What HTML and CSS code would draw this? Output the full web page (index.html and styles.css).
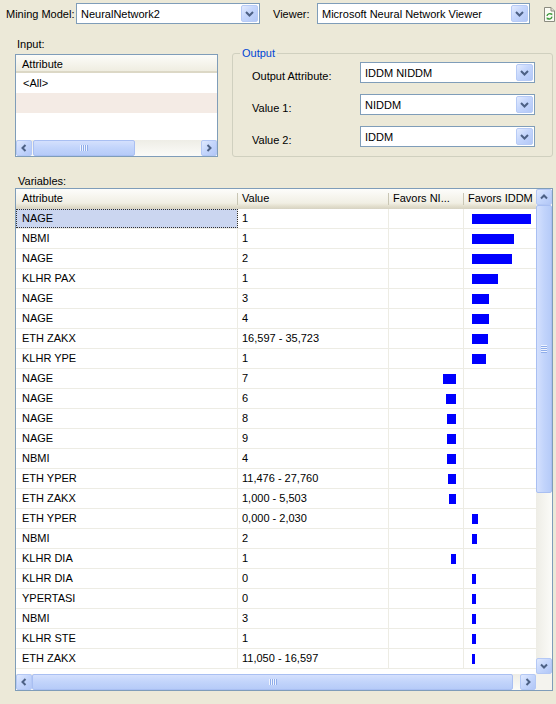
FILE: index.html
```html
<!DOCTYPE html>
<html>
<head>
<meta charset="utf-8">
<link rel="stylesheet" href="styles.css">
</head>
<body>
<div class="topbar">
  <span class="lbl lbl-model">Mining Model:</span>
  <div class="combo combo-model">
    <span class="combo-text">NeuralNetwork2</span>
    <span class="combo-btn"><svg width="9" height="6" viewBox="0 0 9 6"><polyline points="1,1 4.5,4.5 8,1" fill="none" stroke="#4d6185" stroke-width="2"/></svg></span>
  </div>
  <span class="lbl lbl-viewer">Viewer:</span>
  <div class="combo combo-viewer">
    <span class="combo-text">Microsoft Neural Network Viewer</span>
    <span class="combo-btn"><svg width="9" height="6" viewBox="0 0 9 6"><polyline points="1,1 4.5,4.5 8,1" fill="none" stroke="#4d6185" stroke-width="2"/></svg></span>
  </div>
  <span class="refresh">
    <svg width="11" height="15" viewBox="0 0 11 15">
      <path d="M0.5 0.5 H7 L10.5 4 V14.5 H0.5 Z" fill="#fbfbf4" stroke="#8b8b80"/>
      <path d="M7 0.5 V4 H10.5" fill="#e4e4d8" stroke="#8b8b80"/>
      <path d="M3 9 A2.6 2.6 0 0 1 7.6 7.6" fill="none" stroke="#3c9a3c" stroke-width="1.3"/>
      <path d="M8 9.6 A2.6 2.6 0 0 1 3.4 11" fill="none" stroke="#3c9a3c" stroke-width="1.3"/>
      <path d="M6.3 6.2 L8.4 6.4 L8.2 8.5 Z" fill="#3c9a3c"/>
      <path d="M4.7 12.4 L2.6 12.2 L2.8 10.1 Z" fill="#3c9a3c"/>
    </svg>
  </span>
</div>

<div class="mid">
  <div class="input-panel">
    <div class="section-label">Input:</div>
    <div class="listbox">
      <div class="lv-header"><div class="hcell hcell-full">Attribute</div></div>
      <div class="lv-body">
        <div class="lv-row">&lt;All&gt;</div>
        <div class="lv-row lv-row-alt"></div>
      </div>
      <div class="hscroll">
        <span class="sb-btn"><svg width="6" height="8" viewBox="0 0 6 8"><polyline points="4.5,1 1.5,4 4.5,7" fill="none" stroke="#4d6185" stroke-width="2"/></svg></span>
        <div class="sb-track-h">
          <div class="thumb-h thumb-in"><span class="grip-h"></span></div>
        </div>
        <span class="sb-btn"><svg width="6" height="8" viewBox="0 0 6 8"><polyline points="1.5,1 4.5,4 1.5,7" fill="none" stroke="#4d6185" stroke-width="2"/></svg></span>
      </div>
    </div>
  </div>

  <fieldset class="output">
    <legend>Output</legend>
    <div class="orow">
      <span class="olabel">Output Attribute:</span>
      <div class="combo combo-out">
        <span class="combo-text">IDDM NIDDM</span>
        <span class="combo-btn"><svg width="9" height="6" viewBox="0 0 9 6"><polyline points="1,1 4.5,4.5 8,1" fill="none" stroke="#4d6185" stroke-width="2"/></svg></span>
      </div>
    </div>
    <div class="orow">
      <span class="olabel">Value 1:</span>
      <div class="combo combo-out">
        <span class="combo-text">NIDDM</span>
        <span class="combo-btn"><svg width="9" height="6" viewBox="0 0 9 6"><polyline points="1,1 4.5,4.5 8,1" fill="none" stroke="#4d6185" stroke-width="2"/></svg></span>
      </div>
    </div>
    <div class="orow">
      <span class="olabel">Value 2:</span>
      <div class="combo combo-out">
        <span class="combo-text">IDDM</span>
        <span class="combo-btn"><svg width="9" height="6" viewBox="0 0 9 6"><polyline points="1,1 4.5,4.5 8,1" fill="none" stroke="#4d6185" stroke-width="2"/></svg></span>
      </div>
    </div>
  </fieldset>
</div>

<div class="section-label vars-label">Variables:</div>
<div class="gridbox">
  <div class="grid-main">
    <div class="grid-content">
      <div class="ghead">
        <div class="hcell c-attr">Attribute</div>
        <div class="hcell c-val">Value</div>
        <div class="hcell c-ni">Favors NI...</div>
        <div class="hcell c-iddm">Favors IDDM</div>
      </div>
      <div class="grow"><div class="cell c-attr sel">NAGE</div><div class="cell c-val">1</div><div class="cell c-ni"></div><div class="cell c-iddm"><span class="bar" style="width:59px"></span></div></div>
      <div class="grow"><div class="cell c-attr">NBMI</div><div class="cell c-val">1</div><div class="cell c-ni"></div><div class="cell c-iddm"><span class="bar" style="width:42px"></span></div></div>
      <div class="grow"><div class="cell c-attr">NAGE</div><div class="cell c-val">2</div><div class="cell c-ni"></div><div class="cell c-iddm"><span class="bar" style="width:40px"></span></div></div>
      <div class="grow"><div class="cell c-attr">KLHR PAX</div><div class="cell c-val">1</div><div class="cell c-ni"></div><div class="cell c-iddm"><span class="bar" style="width:26px"></span></div></div>
      <div class="grow"><div class="cell c-attr">NAGE</div><div class="cell c-val">3</div><div class="cell c-ni"></div><div class="cell c-iddm"><span class="bar" style="width:17px"></span></div></div>
      <div class="grow"><div class="cell c-attr">NAGE</div><div class="cell c-val">4</div><div class="cell c-ni"></div><div class="cell c-iddm"><span class="bar" style="width:17px"></span></div></div>
      <div class="grow"><div class="cell c-attr">ETH ZAKX</div><div class="cell c-val">16,597 - 35,723</div><div class="cell c-ni"></div><div class="cell c-iddm"><span class="bar" style="width:16px"></span></div></div>
      <div class="grow"><div class="cell c-attr">KLHR YPE</div><div class="cell c-val">1</div><div class="cell c-ni"></div><div class="cell c-iddm"><span class="bar" style="width:14px"></span></div></div>
      <div class="grow"><div class="cell c-attr">NAGE</div><div class="cell c-val">7</div><div class="cell c-ni"><span class="bar" style="width:13px"></span></div><div class="cell c-iddm"></div></div>
      <div class="grow"><div class="cell c-attr">NAGE</div><div class="cell c-val">6</div><div class="cell c-ni"><span class="bar" style="width:10px"></span></div><div class="cell c-iddm"></div></div>
      <div class="grow"><div class="cell c-attr">NAGE</div><div class="cell c-val">8</div><div class="cell c-ni"><span class="bar" style="width:9px"></span></div><div class="cell c-iddm"></div></div>
      <div class="grow"><div class="cell c-attr">NAGE</div><div class="cell c-val">9</div><div class="cell c-ni"><span class="bar" style="width:9px"></span></div><div class="cell c-iddm"></div></div>
      <div class="grow"><div class="cell c-attr">NBMI</div><div class="cell c-val">4</div><div class="cell c-ni"><span class="bar" style="width:9px"></span></div><div class="cell c-iddm"></div></div>
      <div class="grow"><div class="cell c-attr">ETH YPER</div><div class="cell c-val">11,476 - 27,760</div><div class="cell c-ni"><span class="bar" style="width:8px"></span></div><div class="cell c-iddm"></div></div>
      <div class="grow"><div class="cell c-attr">ETH ZAKX</div><div class="cell c-val">1,000 - 5,503</div><div class="cell c-ni"><span class="bar" style="width:7px"></span></div><div class="cell c-iddm"></div></div>
      <div class="grow"><div class="cell c-attr">ETH YPER</div><div class="cell c-val">0,000 - 2,030</div><div class="cell c-ni"></div><div class="cell c-iddm"><span class="bar" style="width:6px"></span></div></div>
      <div class="grow"><div class="cell c-attr">NBMI</div><div class="cell c-val">2</div><div class="cell c-ni"></div><div class="cell c-iddm"><span class="bar" style="width:5px"></span></div></div>
      <div class="grow"><div class="cell c-attr">KLHR DIA</div><div class="cell c-val">1</div><div class="cell c-ni"><span class="bar" style="width:5px"></span></div><div class="cell c-iddm"></div></div>
      <div class="grow"><div class="cell c-attr">KLHR DIA</div><div class="cell c-val">0</div><div class="cell c-ni"></div><div class="cell c-iddm"><span class="bar" style="width:4px"></span></div></div>
      <div class="grow"><div class="cell c-attr">YPERTASI</div><div class="cell c-val">0</div><div class="cell c-ni"></div><div class="cell c-iddm"><span class="bar" style="width:4px"></span></div></div>
      <div class="grow"><div class="cell c-attr">NBMI</div><div class="cell c-val">3</div><div class="cell c-ni"></div><div class="cell c-iddm"><span class="bar" style="width:4px"></span></div></div>
      <div class="grow"><div class="cell c-attr">KLHR STE</div><div class="cell c-val">1</div><div class="cell c-ni"></div><div class="cell c-iddm"><span class="bar" style="width:4px"></span></div></div>
      <div class="grow"><div class="cell c-attr">ETH ZAKX</div><div class="cell c-val">11,050 - 16,597</div><div class="cell c-ni"></div><div class="cell c-iddm"><span class="bar" style="width:3px"></span></div></div>
    </div>
    <div class="vscroll">
      <span class="sb-btn"><svg width="8" height="6" viewBox="0 0 8 6"><polyline points="1,4.5 4,1.5 7,4.5" fill="none" stroke="#4d6185" stroke-width="2"/></svg></span>
      <div class="thumb-v"><span class="grip-v"></span></div>
      <div class="sb-track-v"></div>
      <span class="sb-btn"><svg width="8" height="6" viewBox="0 0 8 6"><polyline points="1,1.5 4,4.5 7,1.5" fill="none" stroke="#4d6185" stroke-width="2"/></svg></span>
    </div>
  </div>
  <div class="hbar-row">
    <div class="hscroll hscroll-main">
      <span class="sb-btn"><svg width="6" height="8" viewBox="0 0 6 8"><polyline points="4.5,1 1.5,4 4.5,7" fill="none" stroke="#4d6185" stroke-width="2"/></svg></span>
      <div class="sb-track-h">
        <div class="thumb-h thumb-main"><span class="grip-h"></span></div>
      </div>
      <span class="sb-btn"><svg width="6" height="8" viewBox="0 0 6 8"><polyline points="1.5,1 4.5,4 1.5,7" fill="none" stroke="#4d6185" stroke-width="2"/></svg></span>
    </div>
    <div class="corner"></div>
  </div>
</div>
</body>
</html>
```
FILE: styles.css
```css
* { box-sizing: border-box; }
html, body { margin: 0; padding: 0; }
body {
  width: 556px;
  height: 704px;
  overflow: hidden;
  background: #ece9d8;
  font-family: "Liberation Sans", Arial, sans-serif;
  font-size: 11px;
  color: #000;
}

/* top bar */
.topbar {
  display: flex;
  align-items: center;
  height: 21px;
  margin-top: 3px;
  padding-left: 6px;
}
.lbl { white-space: nowrap; }
.lbl-model { width: 70px; }
.lbl-viewer { width: 44px; margin-left: 13px; }
.refresh { display: flex; margin-left: 14px; margin-top: 2px; }

.combo {
  height: 21px;
  border: 1px solid #7f9db9;
  background: #fff;
  display: flex;
  align-items: center;
  padding: 1px;
}
.combo-text {
  flex: 1;
  padding-left: 3px;
  white-space: nowrap;
  overflow: hidden;
}
.combo-btn {
  width: 17px;
  height: 17px;
  display: flex;
  align-items: center;
  justify-content: center;
  border: 1px solid #b7cbf6;
  border-radius: 2px;
  background: linear-gradient(135deg, #e3ebfe 0%, #c5d6fc 45%, #b3c8f7 100%);
}
.combo-model { width: 184px; }
.combo-viewer { width: 213px; }
.combo-out { width: 175px; }

/* middle */
.mid { display: flex; margin-top: 13px; }
.input-panel { margin-left: 15px; width: 203px; }
.section-label { line-height: 14px; padding-left: 2px; }
.listbox {
  margin-top: 3px;
  height: 103px;
  border: 1px solid #7f9db9;
  background: #fff;
  display: flex;
  flex-direction: column;
}
.lv-header {
  display: flex;
  height: 18px;
  background: linear-gradient(#fcfcf9, #efede1);
  border-bottom: 2px solid #dcd8c6;
}
.lv-body { flex: 1; }
.lv-row {
  height: 20px;
  line-height: 20px;
  padding-left: 7px;
}
.lv-row-alt { background: #f4ebe5; }

.output {
  margin: 10px 0 0 14px;
  width: 321px;
  border: 1px solid #d0d0bf;
  border-radius: 3px;
  padding: 2px 17px 8px 19px;
  min-width: 0;
}
.output legend {
  color: #0046d5;
  line-height: 13px;
  padding: 0 2px;
  margin-left: -12px;
}
.orow {
  display: flex;
  align-items: center;
  justify-content: space-between;
  margin-bottom: 11px;
}
.orow:last-child { margin-bottom: 0; }
.olabel { padding-top: 6px; }

/* variables grid */
.vars-label { margin: 18px 0 0 16px; line-height: 13px; }
.gridbox {
  margin-left: 15px;
  width: 538px;
  height: 503px;
  border: 1px solid #7f9db9;
  background: #fff;
  display: flex;
  flex-direction: column;
}
.grid-main { display: flex; height: 485px; }
.grid-content { flex: 1; overflow: hidden; }
.ghead {
  display: flex;
  height: 20px;
  background: linear-gradient(#fdfdfb, #f1efe4 70%, #e4e0cf 85%, #d6d2c1 100%);
}
.hcell {
  line-height: 19px;
  padding-left: 4px;
  white-space: nowrap;
  background: linear-gradient(#c9c6b4, #c9c6b4) right 4px / 1px 12px no-repeat;
}
.hcell-full { flex: 1; padding-left: 6px; background: none; }
.c-attr { width: 222px; padding-left: 6px; }
.c-val { width: 151px; }
.c-ni { width: 75px; }
.c-iddm { width: 72px; }
.ghead .c-iddm { background: none; }

.grow {
  display: flex;
  height: 20px;
  border-bottom: 1px solid #edece4;
}
.cell {
  line-height: 19px;
  border-right: 1px solid #edece4;
  white-space: nowrap;
  display: flex;
  align-items: center;
}
.cell.c-val { padding-left: 4px; }
.cell.c-ni { justify-content: flex-end; padding-right: 7px; }
.cell.c-iddm { padding-left: 8px; border-right: none; }
.sel {
  background: #cbd6f0;
  outline: 1px dotted #333;
  outline-offset: -1px;
}
.bar { display: block; height: 10px; background: #0000ff; }

/* scrollbars */
.sb-btn {
  width: 16px;
  height: 16px;
  flex: none;
  display: flex;
  align-items: center;
  justify-content: center;
  border: 1px solid #b4c8f5;
  border-radius: 2px;
  background: linear-gradient(135deg, #e1eafe 0%, #c6d7fc 45%, #b2c7f7 100%);
}
.hscroll {
  display: flex;
  height: 16px;
  background: linear-gradient(#eeede6, #fbfbf8);
}
.sb-track-h { flex: 1; display: flex; }
.thumb-h {
  height: 16px;
  border: 1px solid #a9bff2;
  border-radius: 2px;
  background: linear-gradient(#d4e0fd, #c2d4fb 50%, #b6cbf8);
  display: flex;
  align-items: center;
  justify-content: center;
}
.thumb-in { width: 102px; margin-left: 1px; }
.thumb-main { width: 481px; }
.grip-h {
  width: 8px;
  height: 6px;
  background: repeating-linear-gradient(90deg, #eef3fe 0 1px, #8fadea 1px 2px);
}
.vscroll {
  width: 16px;
  display: flex;
  flex-direction: column;
  background: linear-gradient(90deg, #eeede6, #fbfbf8);
}
.thumb-v {
  height: 288px;
  border: 1px solid #a9bff2;
  border-radius: 2px;
  background: linear-gradient(90deg, #d4e0fd, #c2d4fb 50%, #b6cbf8);
  display: flex;
  align-items: center;
  justify-content: center;
}
.grip-v {
  width: 6px;
  height: 8px;
  background: repeating-linear-gradient(180deg, #eef3fe 0 1px, #8fadea 1px 2px);
}
.sb-track-v { flex: 1; }
.hbar-row { display: flex; height: 16px; margin-top: auto; }
.hscroll-main { flex: 1; }
.corner { width: 16px; background: #f4f3ee; }
```
